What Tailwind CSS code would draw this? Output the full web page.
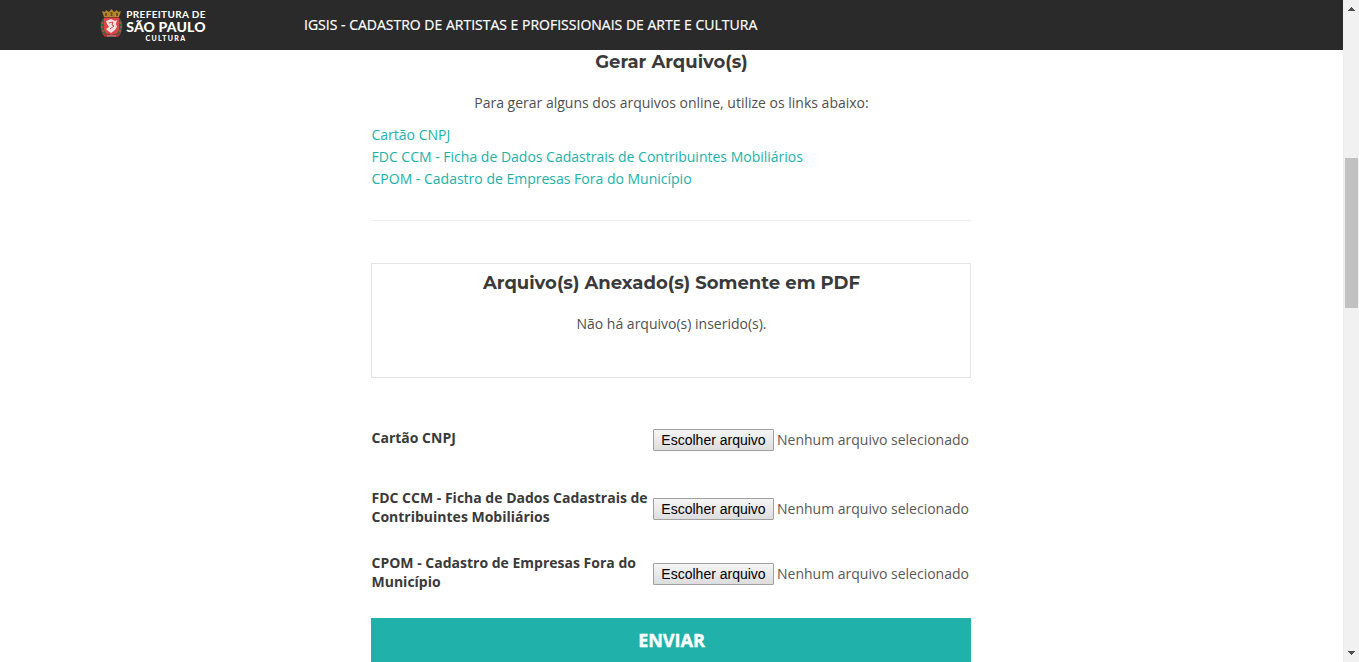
<!DOCTYPE html>
<html lang="pt-BR">
<head>
<meta charset="utf-8">
<title>IGSIS</title>
<script src="https://cdn.jsdelivr.net/npm/@tailwindcss/browser@4"></script>
</head>
<body class="flex h-[662px] w-[1359px] overflow-hidden bg-white font-['Open_Sans',sans-serif] text-sm text-[#3a3a3a]">
<div class="flex h-full w-[1343px] flex-col">
  <header class="flex h-[50px] shrink-0 items-center bg-[#2a2a2a] pl-[100px] text-white">
    <div class="flex w-[204px] items-center">
      <svg class="-mt-[3px] h-[30px] w-[23px] shrink-0" viewBox="0 0 23 30">
        <path d="M4 9C-1 12 0 23 4 27l6-2V9zM19 9c5 3 4 14 0 18l-6-2V9z" fill="#2f6b40"/>
        <path d="M1.500 14h2M1 18h2M2 22h2M21.500 14h-2M22 18h-2M21 22h-2" fill="none" stroke="#c94a45" stroke-width="1.4"/>
        <path d="M4 8L2 2l3 1 1-2 3 2 2.500-3L14 3l3-2 1 2 3-1-2 6z" fill="#b5862d"/>
        <path d="M5 4h2v3H5zM10.500 3h2v4h-2zM16 4h2v3h-2z" fill="#70511f"/>
        <path d="M4 8.500h15V20q0 5-7.500 6Q4 25 4 20z" fill="#dd4448"/>
        <path d="M6 12l5-2 4 2 2-1-1 4 1 3-2 3-4 3-3-2-2-2 3-2-2-3z" fill="#f2e2e0"/>
        <path d="M9 14l4-1-1 3 2 1-4 3" fill="none" stroke="#d9444a"/>
        <path d="M2 24q4 0 6 2h7q2-2 6-2l-3 4-6.500-1L5 28z" fill="#b83238"/>
        <path d="M7 27h9" stroke="#e8b7b5" stroke-width=".8"/>
      </svg>
      <div class="ml-px flex w-[84px] flex-col items-center whitespace-nowrap font-[Lato,sans-serif]">
        <span class="h-[11px] text-[10px] leading-[11px] font-bold tracking-[0.35px]">PREFEITURA DE</span>
        <span class="h-[13px] text-[14px] leading-[14px] font-black tracking-[0.15px]">SÃO PAULO</span>
        <span class="h-[8px] text-[7px] leading-[11px] font-black tracking-[1.3px]">CULTURA</span>
      </div>
    </div>
    <span class="text-sm leading-5 [-webkit-text-stroke:0.2px_white] whitespace-nowrap">IGSIS - CADASTRO DE ARTISTAS E PROFISSIONAIS DE ARTE E CULTURA</span>
  </header>
  <main class="ml-[371px] flex w-[600px] flex-col">
    <h2 class="mt-px pl-px text-center font-[Montserrat,Inter,sans-serif] text-lg leading-[22px] font-bold">Gerar Arquivo(s)</h2>
    <p class="mt-[19px] pl-px text-center leading-[22px] text-[#505050]">Para gerar alguns dos arquivos online, utilize os links abaixo:</p>
    <nav class="mt-[10px] flex flex-col pl-[0.500px] leading-[22px] text-[#20b2aa]">
      <a>Cartão CNPJ</a>
      <a>FDC CCM - Ficha de Dados Cadastrais de Contribuintes Mobiliários</a>
      <a>CPOM - Cadastro de Empresas Fora do Município</a>
    </nav>
    <hr class="mt-[30px] border-[#eeeeee]">
    <section class="mt-[42px] h-[115px] border border-[#e3e3e3] text-center">
      <h2 class="mt-2 pl-px font-[Montserrat,Inter,sans-serif] text-lg leading-[22px] font-bold">Arquivo(s) Anexado(s) Somente em PDF</h2>
      <p class="mt-[19px] pl-px leading-[22px] text-[#505050]">Não há arquivo(s) inserido(s).</p>
    </section>
    <div class="mt-[50px] flex h-[60px]">
      <b class="w-[282px] pl-[0.500px] leading-[19px]">Cartão CNPJ</b>
      <div class="mt-px flex h-[22px] items-center gap-[3px] whitespace-nowrap"><button class="h-[22px] w-[121px] rounded-[1px] border border-[#a0a0a0] bg-linear-to-b from-[#f5f5f5] to-[#dddddd] font-['Liberation_Sans',Arial,sans-serif] leading-5 text-black">Escolher arquivo</button><span class="text-[#585858]">Nenhum arquivo selecionado</span></div>
    </div>
    <div class="flex h-[65px]">
      <b class="w-[282px] pl-[0.500px] leading-[19px]">FDC CCM - Ficha de Dados Cadastrais de<br>Contribuintes Mobiliários</b>
      <div class="mt-[10px] flex h-[22px] items-center gap-[3px] whitespace-nowrap"><button class="h-[22px] w-[121px] rounded-[1px] border border-[#a0a0a0] bg-linear-to-b from-[#f5f5f5] to-[#dddddd] font-['Liberation_Sans',Arial,sans-serif] leading-5 text-black">Escolher arquivo</button><span class="text-[#585858]">Nenhum arquivo selecionado</span></div>
    </div>
    <div class="flex h-[65px]">
      <b class="w-[282px] pl-[0.500px] leading-[19px]">CPOM - Cadastro de Empresas Fora do<br>Município</b>
      <div class="mt-[10px] flex h-[22px] items-center gap-[3px] whitespace-nowrap"><button class="h-[22px] w-[121px] rounded-[1px] border border-[#a0a0a0] bg-linear-to-b from-[#f5f5f5] to-[#dddddd] font-['Liberation_Sans',Arial,sans-serif] leading-5 text-black">Escolher arquivo</button><span class="text-[#585858]">Nenhum arquivo selecionado</span></div>
    </div>
    <button class="h-[44px] bg-[#20b2aa] pl-px text-lg leading-6 font-bold text-white [-webkit-text-stroke:0.4px_white]">ENVIAR</button>
  </main>
</div>
<aside class="flex h-full w-4 flex-col items-center bg-[#f1f1f1]">
  <svg class="mt-[7px] h-1 w-[7px]" viewBox="0 0 7 4" shape-rendering="crispEdges"><path d="M3 0h1v1h1v1h1v1h1v1H0V3h1V2h1V1h1z" fill="#505050"/></svg>
  <div class="mt-[147px] ml-[1px] h-[150px] w-[13px] bg-[#c1c1c1]"></div>
  <svg class="mt-auto mb-[7px] h-1 w-[7px]" viewBox="0 0 7 4" shape-rendering="crispEdges"><path d="M0 0h7v1H6v1H5v1H4v1H3V3H2V2H1V1H0z" fill="#505050"/></svg>
</aside>
</body>
</html>
